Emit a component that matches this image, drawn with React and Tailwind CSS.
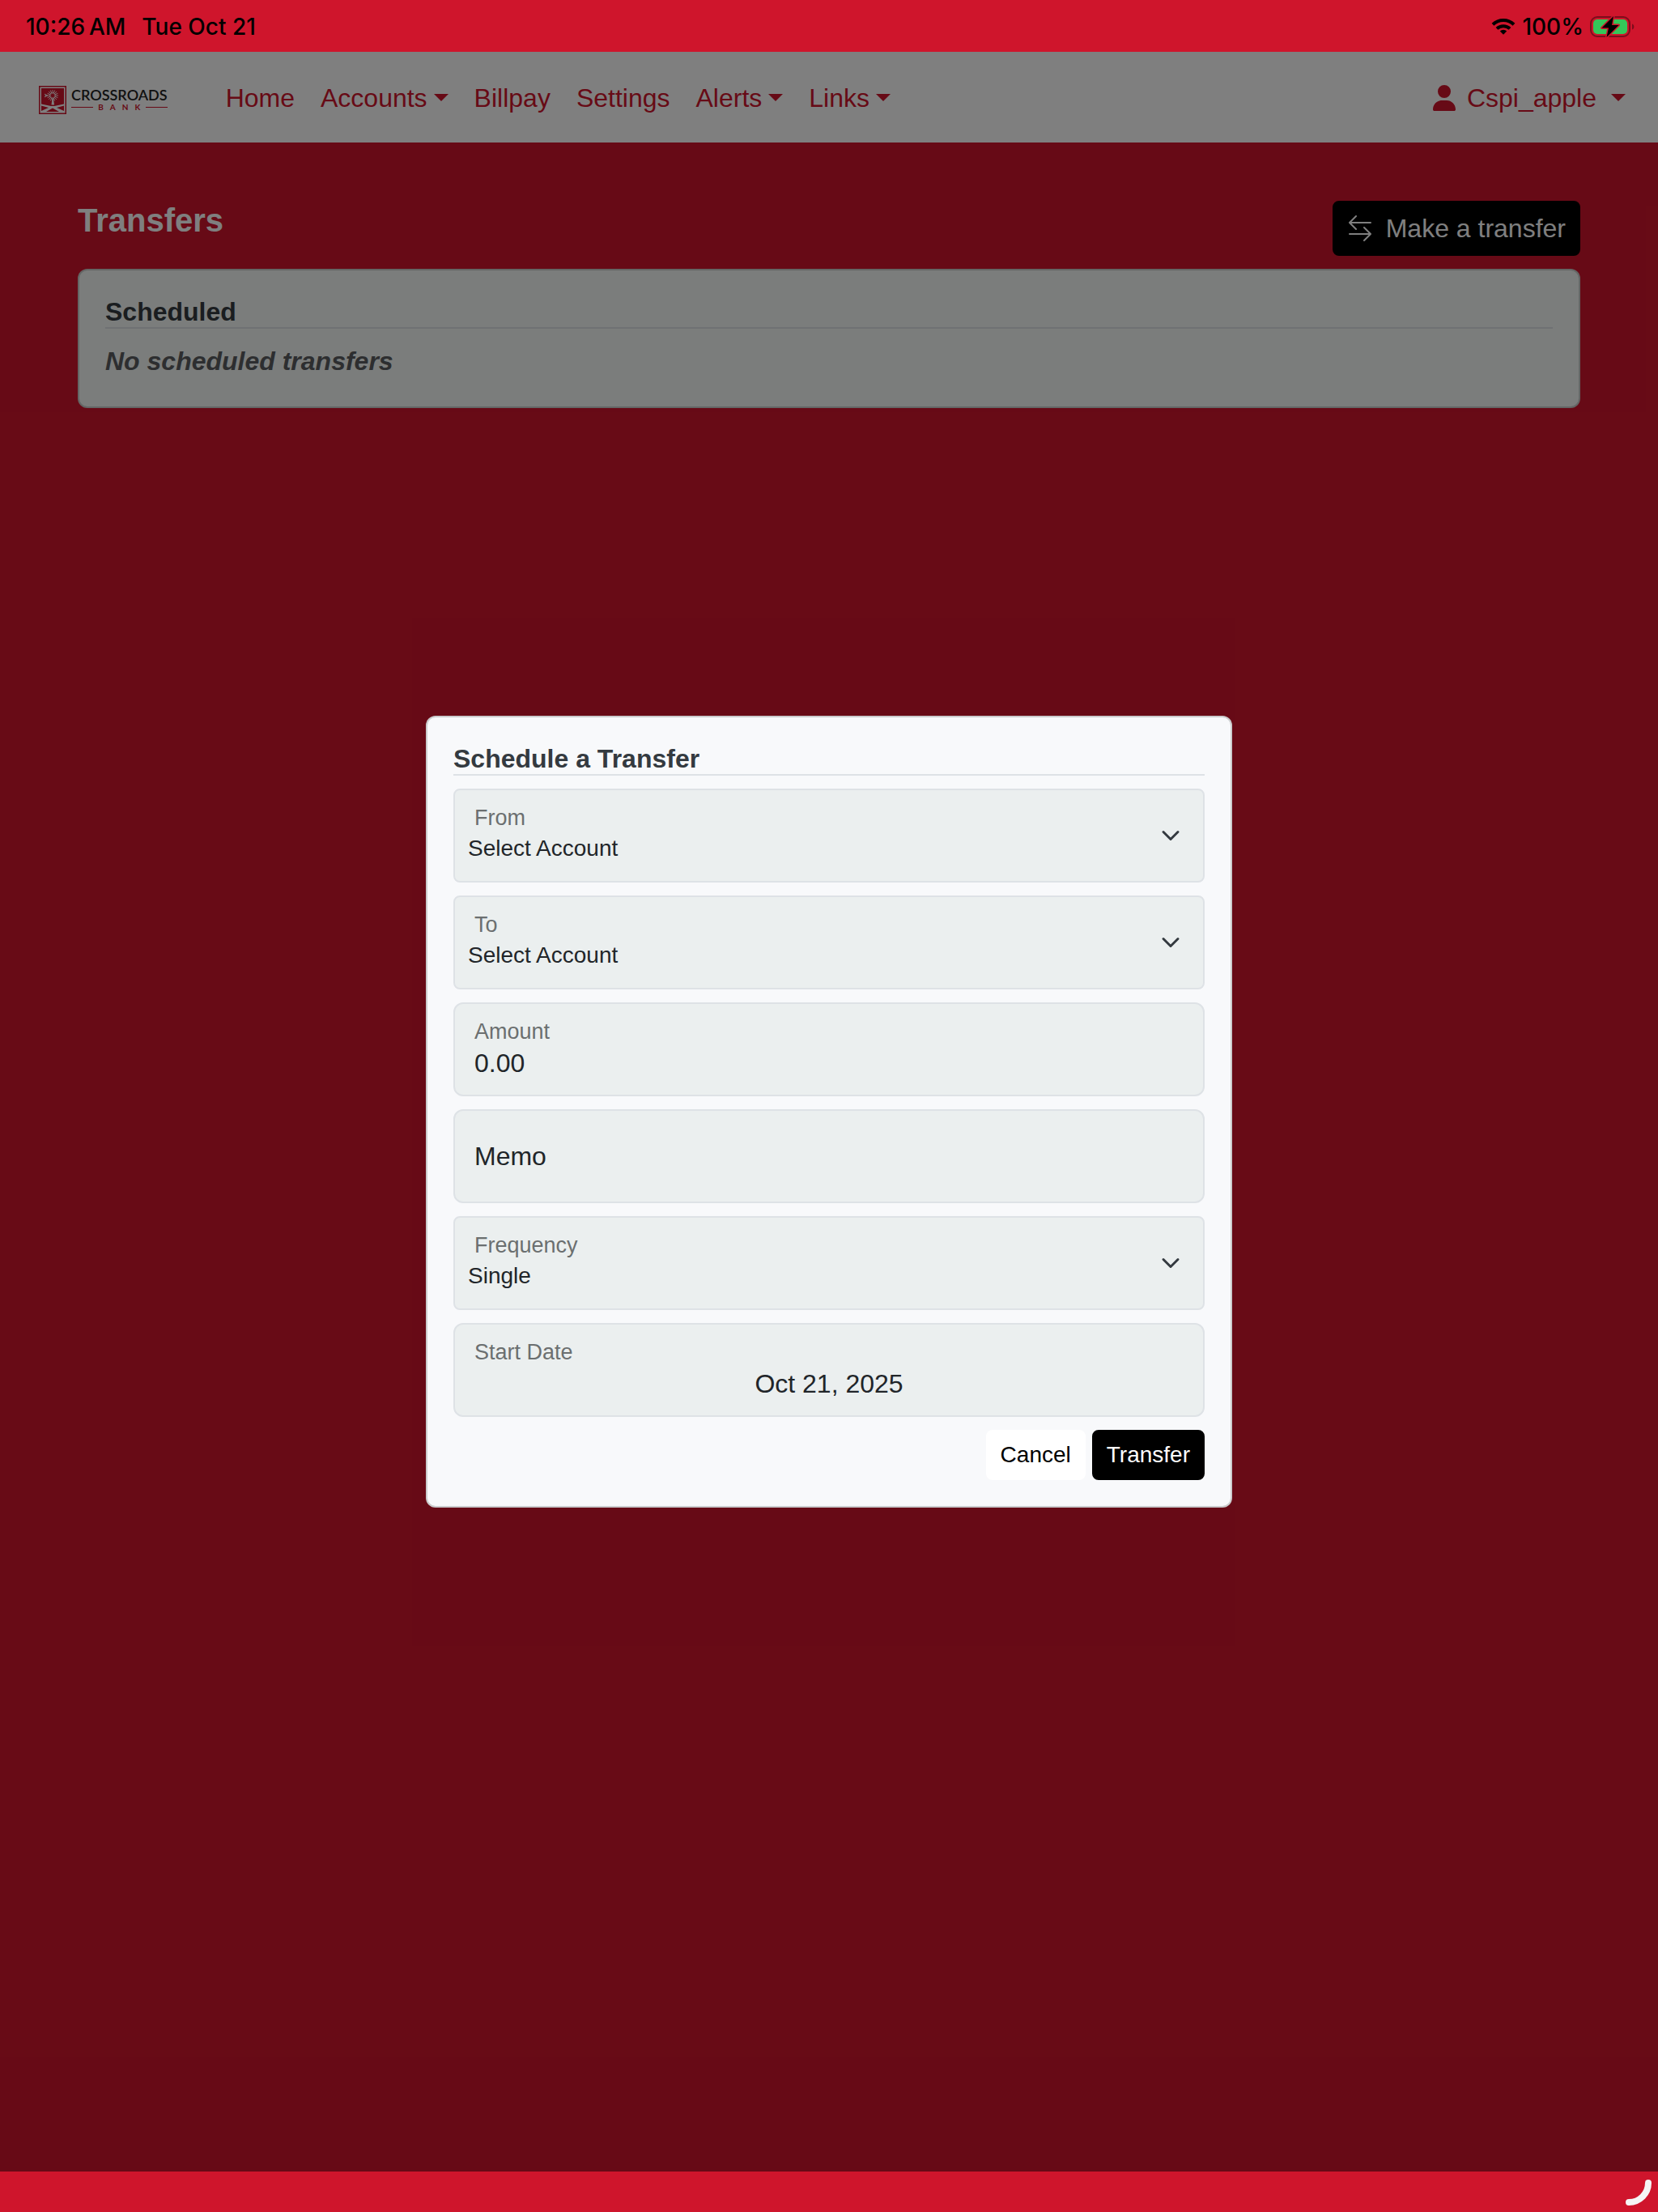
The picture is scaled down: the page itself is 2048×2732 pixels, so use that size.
import { useState } from 'react'
import { BsArrowLeftRight } from 'react-icons/bs'
import { FaUser } from 'react-icons/fa6'

const NAV_ITEMS = [
  { label: 'Home' },
  { label: 'Accounts', hasMenu: true },
  { label: 'Billpay' },
  { label: 'Settings' },
  { label: 'Alerts', hasMenu: true },
  { label: 'Links', hasMenu: true },
]

const RAYS = Array.from({ length: 16 }, (_, i) => i * 22.5)

function StatusBar() {
  return (
    <div className="flex h-16 shrink-0 items-center justify-between bg-[#cf152c] pt-px pr-7 pl-8 font-['Inter',sans-serif] text-[28px] font-medium text-black">
      <div className="flex gap-5">
        <span>10:26{'\u2009'}AM</span>
        <span>Tue Oct 21</span>
      </div>
      <div className="flex items-center gap-2">
        <svg viewBox="0 0 30 21" className="h-[21px] w-[30px]" aria-hidden="true">
          <g fill="none" stroke="currentColor" strokeWidth="4">
            <path d="M2 8.2a18.6 18.6 0 0 1 26 0" />
            <path d="M7 13.4a11.6 11.6 0 0 1 16 0" />
          </g>
          <path d="M15 20.8l-4.2-4.3a6.2 6.2 0 0 1 8.4 0z" fill="currentColor" />
        </svg>
        <span>100%</span>
        <svg viewBox="0 0 56 28" className="h-7 w-14" aria-hidden="true">
          <rect x="1" y="2" width="48" height="24" rx="8" fill="none" stroke="#7d0d1c" strokeWidth="2" />
          <path d="M52 10.500c3.200 1 3.200 6 0 7z" fill="#7d0d1c" />
          <rect x="4" y="5" width="42" height="18" rx="5" fill="#34c759" />
          <path
            d="M29 1L14.500 15.500h8.500L20.500 27 35.500 12h-8.500z"
            fill="#000"
            stroke="#cf152c"
            strokeWidth="3"
            strokeLinejoin="round"
            paintOrder="stroke"
          />
        </svg>
      </div>
    </div>
  )
}

function Caret() {
  return (
    <svg viewBox="0 0 18 9" className="mb-0.5 h-[9px] w-[18px]" aria-hidden="true">
      <path d="M0 0h18L9 9z" fill="currentColor" />
    </svg>
  )
}

function Logo() {
  return (
    <a href="#home" className="flex items-center gap-1.5 pt-1" aria-label="Crossroads Bank">
      <svg viewBox="0 0 34 35" className="h-[35px] w-[34px]" aria-hidden="true">
        <rect x="0.750" y="0.750" width="32.500" height="33.500" fill="#fff" stroke="#cf152c" strokeWidth="1.500" />
        <rect x="3" y="3" width="28" height="29" fill="#cf152c" />
        <g stroke="#fff" strokeWidth="0.800">
          {RAYS.map((angle) => (
            <path key={angle} d="M17 9.500V5" transform={`rotate(${angle} 17 12)`} />
          ))}
        </g>
        <circle cx="17" cy="12" r="3.500" fill="none" stroke="#fff" strokeWidth="0.500" />
        <path d="M7 10l4 2-4 2 1.500-2z" fill="#fff" stroke="#fff" strokeWidth="0.500" />
        <path d="M16.500 16h1.500l1 7.500h-3.500z" fill="#fff" />
        <path d="M3 22.500l12 2.500h4l12-2.500v2L22 27l9 4v1h-6l-8-4.500L9 32H3v-1l9-4-9-2.500z" fill="#fff" />
      </svg>
      <span className="flex flex-col gap-0.5 font-['Lato',sans-serif]">
        <span className="text-[18px] leading-4 font-semibold text-[#222]">CROSSROADS</span>
        <span className="flex items-center justify-between">
          <span className="h-px w-[27px] bg-[#cf152c]" />
          <span className="-mr-2 text-[10px] leading-[10px] font-bold tracking-[8px] text-[#cf152c]">BANK</span>
          <span className="h-px w-[27px] bg-[#cf152c]" />
        </span>
      </span>
    </a>
  )
}

function NavBar() {
  return (
    <header className="flex h-28 shrink-0 items-center bg-white pt-0.5 pr-10 pl-12 text-[32px] text-[#cf152c]">
      <Logo />
      <nav className="ml-[72px] flex gap-8">
        {NAV_ITEMS.map((item) => (
          <a key={item.label} href={`#${item.label.toLowerCase()}`} className="flex items-center gap-2">
            {item.label}
            {item.hasMenu ? <Caret /> : null}
          </a>
        ))}
      </nav>
      <button type="button" className="ml-auto flex items-center gap-[18px]">
        <span className="flex items-center gap-3.5">
          <FaUser className="h-8 w-7" />
          Cspi_apple
        </span>
        <Caret />
      </button>
    </header>
  )
}

function SectionTitle({ children }) {
  return (
    <h2 className="border-b-2 border-[#dee2e6] text-[32px] leading-[38px] font-bold text-[#343a40]">{children}</h2>
  )
}

function SelectField({ id, label, options, value, onChange }) {
  return (
    <div className="flex h-[116px] items-center rounded-lg border-2 border-[#dee2e6] bg-[#ebefef]">
      <div className="flex h-full flex-1 flex-col pt-4">
        <label htmlFor={id} className="pb-1 pl-6 text-[27px] leading-9 text-[#6b6f70]">
          {label}
        </label>
        <select
          id={id}
          value={value}
          onChange={(event) => onChange(event.target.value)}
          className="w-full appearance-none bg-transparent pl-4 text-[28px] leading-8 text-[#212529] outline-none"
        >
          {options.map((option) => (
            <option key={option}>{option}</option>
          ))}
        </select>
      </div>
      <svg viewBox="0 0 16 16" className="pointer-events-none mr-7 size-6" aria-hidden="true">
        <path
          d="m2 5 6 6 6-6"
          fill="none"
          stroke="#343a40"
          strokeWidth="2"
          strokeLinecap="round"
          strokeLinejoin="round"
        />
      </svg>
    </div>
  )
}

function TextField({ id, label, value, onChange, centered = false }) {
  return (
    <div className="flex h-[116px] flex-col rounded-xl border-2 border-[#dee2e6] bg-[#ebefef] px-6 pt-4">
      <label htmlFor={id} className="pb-1 text-[27px] leading-9 text-[#6b6f70]">
        {label}
      </label>
      <input
        id={id}
        type="text"
        value={value}
        onChange={(event) => onChange(event.target.value)}
        className={`h-[34px] w-full bg-transparent text-[32px] text-[#212529] outline-none ${centered ? 'text-center' : ''}`}
      />
    </div>
  )
}

function TransferModal() {
  const [from, setFrom] = useState('Select Account')
  const [to, setTo] = useState('Select Account')
  const [amount, setAmount] = useState('0.00')
  const [memo, setMemo] = useState('')
  const [frequency, setFrequency] = useState('Single')
  const [startDate, setStartDate] = useState('Oct 21, 2025')

  return (
    <form
      role="dialog"
      aria-label="Schedule a Transfer"
      className="flex w-full max-w-[996px] flex-col gap-4 rounded-xl border-2 border-black/18 bg-[#f8f9fb] p-8"
    >
      <SectionTitle>Schedule a Transfer</SectionTitle>
      <SelectField id="from" label="From" options={['Select Account']} value={from} onChange={setFrom} />
      <SelectField id="to" label="To" options={['Select Account']} value={to} onChange={setTo} />
      <TextField id="amount" label="Amount" value={amount} onChange={setAmount} />
      <input
        type="text"
        aria-label="Memo"
        placeholder="Memo"
        value={memo}
        onChange={(event) => setMemo(event.target.value)}
        className="h-[116px] w-full rounded-xl border-2 border-[#dee2e6] bg-[#ebefef] px-6 text-[32px] text-[#212529] outline-none placeholder:text-[#212529]"
      />
      <SelectField
        id="frequency"
        label="Frequency"
        options={['Single', 'Weekly', 'Monthly']}
        value={frequency}
        onChange={setFrequency}
      />
      <TextField id="start-date" label="Start Date" value={startDate} onChange={setStartDate} centered />
      <div className="flex justify-end gap-2 text-[28px] leading-[42px]">
        <button type="button" className="rounded-lg border-2 border-white bg-white px-4 py-2 text-black">
          Cancel
        </button>
        <button type="button" className="rounded-lg border-2 border-black bg-black px-4 py-2 text-white">
          Transfer
        </button>
      </div>
    </form>
  )
}

function App() {
  return (
    <div className="flex min-h-screen flex-col bg-[#cf152c] font-['Liberation_Sans',Arial,sans-serif]">
      <StatusBar />

      <div className="relative flex flex-1 flex-col">
        <NavBar />
        <main className="px-24 pt-[72px]">
          <div className="flex items-start justify-between pb-4">
            <h1 className="text-[40px] leading-12 font-bold text-white">Transfers</h1>
            <button
              type="button"
              className="flex items-center gap-4 rounded-lg border-2 border-black bg-black px-4 py-2 text-[32px] leading-12 text-white"
            >
              <BsArrowLeftRight className="size-8" />
              Make a transfer
            </button>
          </div>
          <section className="rounded-xl border-2 border-black/18 bg-[#f6faf8] p-8">
            <SectionTitle>Scheduled</SectionTitle>
            <p className="mt-4 text-[32px] leading-12 font-bold text-[#5a5d60] italic">No scheduled transfers</p>
          </section>
        </main>

        <div className="absolute inset-0 flex items-center justify-center bg-black/50">
          <TransferModal />
        </div>
      </div>

      <footer className="flex h-[50px] shrink-0 items-end justify-end p-2">
        <svg viewBox="0 0 32 32" className="size-8" aria-hidden="true">
          <path d="M28 4A24 24 0 0 1 4 28" fill="none" stroke="#f5f5f5" strokeWidth="8" strokeLinecap="round" />
        </svg>
      </footer>
    </div>
  )
}

export default App
